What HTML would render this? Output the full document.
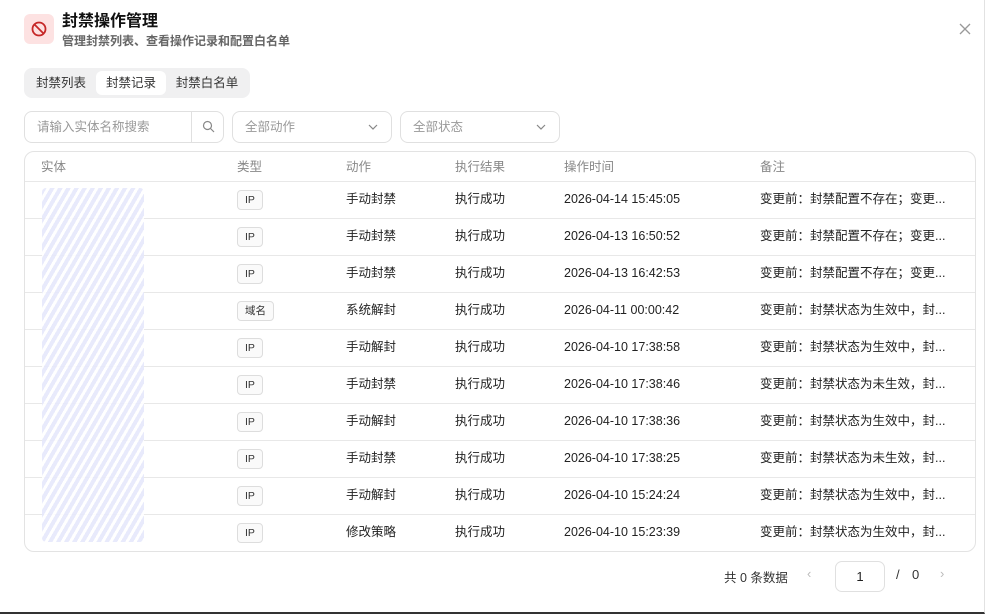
<!DOCTYPE html>
<html><head><meta charset="utf-8"><style>
*{box-sizing:border-box;margin:0;padding:0}
body{width:986px;height:616px;background:#fff;font-family:"Liberation Sans","Noto Sans CJK SC",sans-serif;color:#1f1f1f;position:relative;overflow:hidden}
.frame{position:absolute;left:0;top:0;width:985px;height:614px;border-right:1px solid #e2e2e2;border-bottom:2px solid #333}
.abs{position:absolute}
.icon{left:24px;top:14px;width:30px;height:30px;background:#fde2e2;border-radius:6px}
.title{left:62px;top:7px;font-size:16px;font-weight:bold;color:#111}
.sub{left:62px;top:32px;font-size:12px;color:#666;font-weight:bold}
.tabs{left:24px;top:68px;width:226px;height:30px;background:#f0f0f1;border-radius:8px}
.tab{position:absolute;top:3px;height:24px;line-height:24px;font-size:12.5px;color:#333;text-align:center}
.inp{top:111px;height:32px;border:1px solid #e0e0e0;border-radius:8px;font-size:12.5px;color:#999;line-height:30px;padding-left:12px}
.tbl{left:24px;top:151px;width:952px;height:401px;border:1px solid #e3e3e3;border-radius:10px;overflow:hidden}
.hd{position:absolute;top:0;height:30px;line-height:30px;font-size:12.5px;color:#888}
.row{position:absolute;left:0;width:952px;height:37px;border-top:1px solid #e8e8e8;font-size:12.5px;color:#222}
.row span{position:absolute;top:-1px;line-height:36px}
.tag{position:absolute;top:8px;height:20px;line-height:18px;border:1px solid #ddd;border-radius:4px;background:#fafafa;font-size:10.5px;padding:0 7px;color:#333}
.hatch{left:42px;top:188px;width:102px;height:354px;background:repeating-linear-gradient(120deg,#e6e8fb 0 4px,#fff 4px 7px);border-radius:4px;opacity:.9}
</style></head><body>
<div class="frame"></div>
<div class="abs icon"><svg width="30" height="30" viewBox="0 0 30 30"><circle cx="15" cy="15" r="6.5" fill="none" stroke="#c62828" stroke-width="1.8"/><line x1="10.5" y1="10.5" x2="19.5" y2="19.5" stroke="#c62828" stroke-width="1.8"/></svg></div>
<div class="abs title">封禁操作管理</div>
<div class="abs sub">管理封禁列表、查看操作记录和配置白名单</div>
<svg class="abs" style="left:959px;top:23px" width="12" height="12"><path d="M1 1L11 11M11 1L1 11" stroke="#999" stroke-width="1.3"/></svg>
<div class="abs tabs">
<div class="tab" style="left:4px;width:66px">封禁列表</div>
<div class="tab" style="left:72px;width:70px;background:#fff;border-radius:6px">封禁记录</div>
<div class="tab" style="left:144px;width:78px">封禁白名单</div>
</div>
<div class="abs inp" style="left:24px;width:200px">请输入实体名称搜索</div>
<div class="abs" style="left:191px;top:112px;width:1px;height:30px;background:#e0e0e0"></div>
<svg class="abs" style="left:202px;top:120px" width="13" height="13"><circle cx="5.5" cy="5.5" r="4" fill="none" stroke="#888" stroke-width="1.2"/><path d="M8.5 8.5L12 12" stroke="#888" stroke-width="1.2"/></svg>
<div class="abs inp" style="left:232px;width:160px">全部动作</div>
<div class="abs inp" style="left:400px;width:160px">全部状态</div>
<svg class="abs" style="left:368px;top:123px" width="10" height="8"><path d="M1 2L5 6L9 2" fill="none" stroke="#888" stroke-width="1.2"/></svg>
<svg class="abs" style="left:536px;top:123px" width="10" height="8"><path d="M1 2L5 6L9 2" fill="none" stroke="#888" stroke-width="1.2"/></svg>
<div class="abs tbl">
<div class="hd" style="left:16px">实体</div><div class="hd" style="left:212px">类型</div><div class="hd" style="left:321px">动作</div><div class="hd" style="left:430px">执行结果</div><div class="hd" style="left:539px">操作时间</div><div class="hd" style="left:735px">备注</div>
<div class="row" style="top:29px"><div class="tag" style="left:212px">IP</div><span style="left:321px">手动封禁</span><span style="left:430px">执行成功</span><span style="left:539px">2026-04-14 15:45:05</span><span style="left:735px">变更前：封禁配置不存在；变更...</span></div>
<div class="row" style="top:66px"><div class="tag" style="left:212px">IP</div><span style="left:321px">手动封禁</span><span style="left:430px">执行成功</span><span style="left:539px">2026-04-13 16:50:52</span><span style="left:735px">变更前：封禁配置不存在；变更...</span></div>
<div class="row" style="top:103px"><div class="tag" style="left:212px">IP</div><span style="left:321px">手动封禁</span><span style="left:430px">执行成功</span><span style="left:539px">2026-04-13 16:42:53</span><span style="left:735px">变更前：封禁配置不存在；变更...</span></div>
<div class="row" style="top:140px"><div class="tag" style="left:212px">域名</div><span style="left:321px">系统解封</span><span style="left:430px">执行成功</span><span style="left:539px">2026-04-11 00:00:42</span><span style="left:735px">变更前：封禁状态为生效中，封...</span></div>
<div class="row" style="top:177px"><div class="tag" style="left:212px">IP</div><span style="left:321px">手动解封</span><span style="left:430px">执行成功</span><span style="left:539px">2026-04-10 17:38:58</span><span style="left:735px">变更前：封禁状态为生效中，封...</span></div>
<div class="row" style="top:214px"><div class="tag" style="left:212px">IP</div><span style="left:321px">手动封禁</span><span style="left:430px">执行成功</span><span style="left:539px">2026-04-10 17:38:46</span><span style="left:735px">变更前：封禁状态为未生效，封...</span></div>
<div class="row" style="top:251px"><div class="tag" style="left:212px">IP</div><span style="left:321px">手动解封</span><span style="left:430px">执行成功</span><span style="left:539px">2026-04-10 17:38:36</span><span style="left:735px">变更前：封禁状态为生效中，封...</span></div>
<div class="row" style="top:288px"><div class="tag" style="left:212px">IP</div><span style="left:321px">手动封禁</span><span style="left:430px">执行成功</span><span style="left:539px">2026-04-10 17:38:25</span><span style="left:735px">变更前：封禁状态为未生效，封...</span></div>
<div class="row" style="top:325px"><div class="tag" style="left:212px">IP</div><span style="left:321px">手动解封</span><span style="left:430px">执行成功</span><span style="left:539px">2026-04-10 15:24:24</span><span style="left:735px">变更前：封禁状态为生效中，封...</span></div>
<div class="row" style="top:362px"><div class="tag" style="left:212px">IP</div><span style="left:321px">修改策略</span><span style="left:430px">执行成功</span><span style="left:539px">2026-04-10 15:23:39</span><span style="left:735px">变更前：封禁状态为生效中，封...</span></div>
</div>
<div class="abs hatch"></div>
<div class="abs" style="left:724px;top:567px;font-size:12.5px;color:#333">共 0 条数据</div>
<div class="abs" style="left:807px;top:566px;font-size:13px;color:#bbb">‹</div>
<div class="abs" style="left:835px;top:561px;width:50px;height:31px;border:1px solid #e0e0e0;border-radius:7px;text-align:center;line-height:29px;font-size:13px">1</div>
<div class="abs" style="left:896px;top:567px;font-size:13px;color:#333">/</div>
<div class="abs" style="left:912px;top:567px;font-size:13px;color:#333">0</div>
<div class="abs" style="left:940px;top:566px;font-size:13px;color:#bbb">›</div>
</body></html>
